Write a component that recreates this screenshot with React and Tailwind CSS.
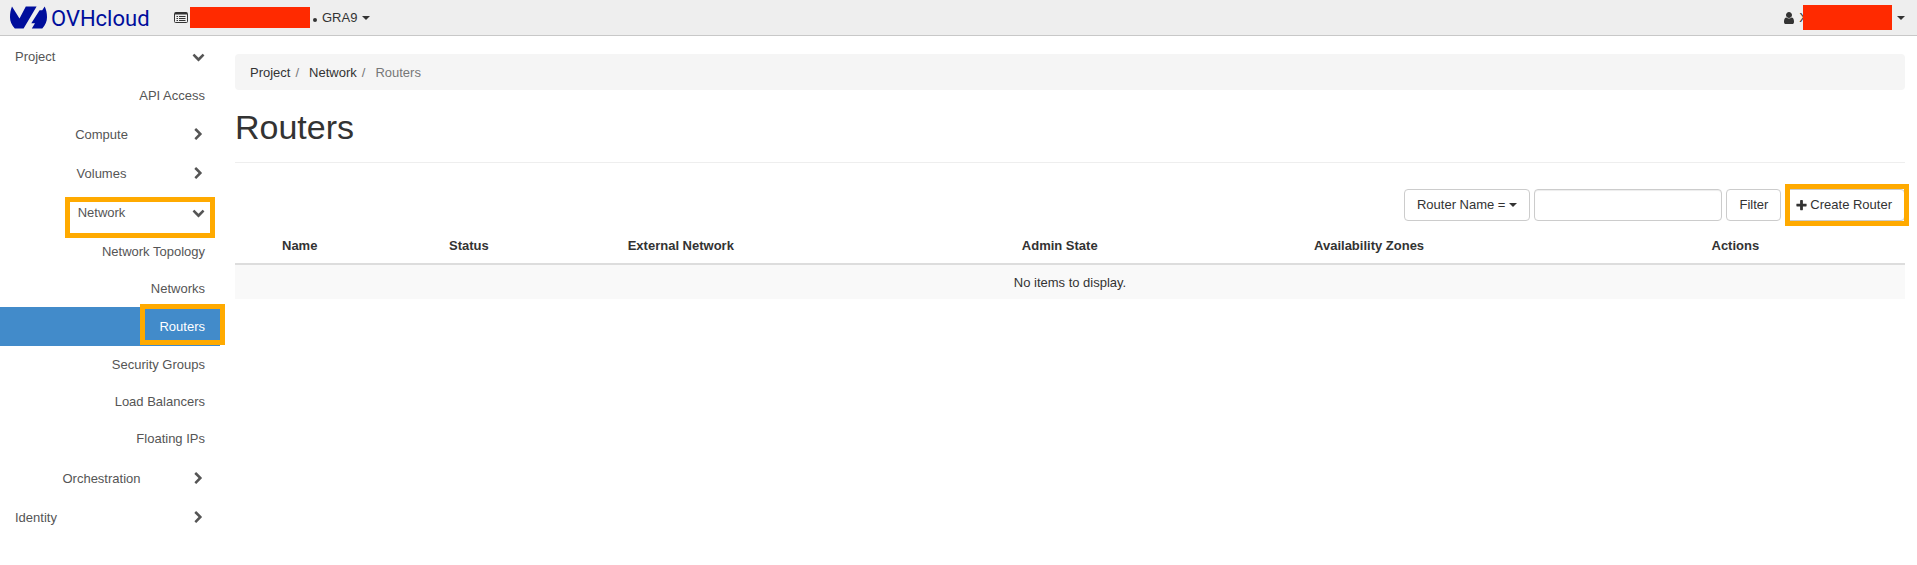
const down = "M1683 808l-742 741q-19 19-45 19t-45-19l-742-741q-19-19-19-45.5t19-45.5l166-165q19-19 45-19t45 19l531 531 531-531q19-19 45-19t45 19l166 165q19 19 19 45.5t-19 45.5z";
const right = "M1363 877l-742 742q-19 19-45 19t-45-19l-166-166q-19-19-19-45t19-45l531-531-531-531q-19-19-19-45t19-45l166-166q19-19 45-19t45 19l742 742q19 19 19 45t-19 45z";
const user = "M1536 1399q0 109-62.5 187t-150.5 78h-854q-88 0-150.5-78t-62.5-187q0-85 8.5-160.5t31.5-152 58.5-131 94-89 134.5-34.5q131 128 313 128t313-128q76 0 134.5 34.5t94 89 58.5 131 31.5 152 8.5 160.5zm-256-887q0 159-112.5 271.5t-271.5 112.5-271.5-112.5-112.5-271.5 112.5-271.5 271.5-112.5 271.5 112.5 112.5 271.5z";
const plus = "M1600 736v192q0 40-28 68t-68 28h-416v416q0 40-28 68t-68 28h-192q-40 0-68-28t-28-68v-416h-416q-40 0-68-28t-28-68v-192q0-40 28-68t68-28h416v-416q0-40 28-68t68-28h192q40 0 68 28t28 68v416h416q40 0 68 28t28 68z";

function Icon({ d, className = "size-[13px]" }) {
  return (
    <svg viewBox="0 0 1792 1792" fill="currentColor" aria-hidden="true" className={`shrink-0 ${className}`}>
      <path d={d} />
    </svg>
  );
}

function Caret() {
  return (
    <svg viewBox="0 0 8 4" fill="currentColor" aria-hidden="true" className="h-1 w-2 shrink-0">
      <path d="M0 0h8L4 4z" />
    </svg>
  );
}

function ListIcon() {
  return (
    <svg viewBox="0 0 14 11" fill="none" stroke="currentColor" aria-hidden="true" className="h-[11px] w-3.5 shrink-0">
      <rect x="0.5" y="0.5" width="13" height="10" rx="1" />
      <path d="M1 1.5h12" strokeWidth="2" />
      <path d="M2.5 4.5h1.5M5 4.5h6.5M2.5 6.5h1.5M5 6.5h6.5M2.5 8.5h1.5M5 8.5h6.5" />
    </svg>
  );
}

function Logo() {
  return (
    <svg viewBox="0 0 144 24" role="img" aria-label="OVHcloud" className="h-6 w-36">
      <g fill="#000e9c">
        <path d="M2 0.5 9.5 12.5 15.8 0.5H26.6L13.6 22.5H4.8C1.5 19 0 15.5 0 11.3 0 7.3 0.7 3.6 2 0.5z" />
        <path d="M34.7 0.5C36.2 3.6 37 7 37 11.3 37 15.5 35.5 19 32.3 22.5H21.8L25 17.3H21.3L29.6 4.3H32.2z" />
      </g>
      <text x="41" y="20" fill="#000e9c" fontSize="22" fontFamily="Roboto, sans-serif">OVHcloud</text>
    </svg>
  );
}

function Highlight({ className }) {
  return <span aria-hidden="true" className={`pointer-events-none absolute z-10 border-5 border-[#ffaa00] ${className}`} />;
}

function Section({ label, open, top, marked, children }) {
  return (
    <li>
      <div className="relative">
        <button type="button" aria-expanded={!!open} className="flex h-[39px] w-full items-center px-[15px]">
          <span className={top ? "flex-1 text-left" : "flex-1 text-center"}>{label}</span>
          <span className="flex w-[17px] justify-end">
            <Icon d={open ? down : right} />
          </span>
        </button>
        {marked && <Highlight className="top-1 right-[5px] h-[41px] w-[150px]" />}
      </div>
      {children}
    </li>
  );
}

function Leaf({ label, tall, active }) {
  return (
    <li className="relative">
      <a
        href="#"
        className={`flex items-center justify-end px-[15px] ${tall || active ? "h-[39px]" : "h-[37px]"} ${active ? "bg-[#428bca] text-white" : ""}`}
      >
        {label}
      </a>
      {active && <Highlight className="-top-[3px] -right-[5px] h-[41px] w-[85px]" />}
    </li>
  );
}

function Sidebar() {
  return (
    <nav className="w-[220px] shrink-0 pt-px text-[#555]">
      <ul>
        <Section label="Project" open top>
          <ul>
            <Leaf label="API Access" tall />
            <Section label="Compute" />
            <Section label="Volumes" />
            <Section label="Network" open marked>
              <ul className="pt-px pb-0.5">
                <Leaf label="Network Topology" />
                <Leaf label="Networks" />
                <Leaf label="Routers" active />
                <Leaf label="Security Groups" />
                <Leaf label="Load Balancers" />
                <Leaf label="Floating IPs" />
              </ul>
            </Section>
            <Section label="Orchestration" />
          </ul>
        </Section>
        <Section label="Identity" top />
      </ul>
    </nav>
  );
}

const button = "flex h-8 items-center rounded border border-[#ccc] bg-white";

export default function App() {
  return (
    <div className="bg-white font-['Helvetica_Neue','Liberation_Sans',sans-serif] text-[13px] leading-[18px] text-[#333]">
      <header className="flex h-9 items-center border-b border-[#c8c8c8] bg-[#eee]">
        <a href="#" className="ml-2.5">
          <Logo />
        </a>
        <button type="button" className="ml-5 flex items-center">
          <ListIcon />
          <span className="ml-0.5 h-[21px] w-[120px] bg-[#ff2a00]" />
          <span className="mx-[3px] mt-1 size-1 rounded-full bg-[#333]" />
          <span className="mr-[5px] ml-0.5">GRA9</span>
          <Caret />
        </button>
        <button type="button" className="mr-3 ml-auto flex items-center">
          <Icon d={user} className="size-3.5" />
          <span className="ml-[3px]">X</span>
          <span className="relative mr-[5px] -ml-[5px] h-[25px] w-[89px] bg-[#ff2a00]" />
          <Caret />
        </button>
      </header>
      <div className="flex">
        <Sidebar />
        <main className="min-w-0 flex-1 pt-[18px] pr-3 pl-[15px]">
          <nav aria-label="Breadcrumb" className="rounded bg-[#f5f5f5] px-[15px] pt-2.5 pb-2">
            <ol className="flex">
              <li><a href="#">Project</a></li>
              <li className="px-[5px] text-[#777]">/</li>
              <li className="pl-[5px]"><a href="#">Network</a></li>
              <li className="px-[5px] text-[#777]">/</li>
              <li className="pl-[5px] text-[#777]">Routers</li>
            </ol>
          </nav>
          <h1 className="border-b border-[#eee] pt-[18px] pb-[15px] text-[34px] leading-[39px]">Routers</h1>
          <form className="mt-[26px] flex items-center justify-end gap-1" onSubmit={(e) => e.preventDefault()}>
            <button type="button" className={`${button} gap-1 px-3`}>
              Router Name = <Caret />
            </button>
            <input
              type="text"
              aria-label="Router name"
              className="h-8 w-[188px] rounded border border-[#ccc] px-3 shadow-[inset_0_1px_1px_rgba(0,0,0,0.075)] outline-none"
            />
            <button type="submit" className={`${button} px-3`}>Filter</button>
            <div className="relative">
              <button type="button" className={`${button} gap-0.5 pr-3 pl-[9px]`}>
                <Icon d={plus} />
                Create Router
              </button>
              <Highlight className="-inset-y-[5px] -right-1 left-0" />
            </div>
          </form>
          <table className="mt-[7px] w-full table-fixed text-left">
            <thead>
              <tr className="h-9 border-b-2 border-[#ddd]">
                <td className="w-[39px]" />
                <th scope="col" className="w-[10%] px-2">Name</th>
                <th scope="col" className="w-[10.7%] px-2">Status</th>
                <th scope="col" className="w-[23.6%] px-2">External Network</th>
                <th scope="col" className="w-[17.5%] px-2">Admin State</th>
                <th scope="col" className="w-[23.8%] px-2">Availability Zones</th>
                <th scope="col" className="px-2">Actions</th>
              </tr>
            </thead>
            <tbody>
              <tr className="h-[35px] bg-[#f9f9f9]">
                <td colSpan={7} className="px-2 pt-0.5 text-center">No items to display.</td>
              </tr>
            </tbody>
          </table>
        </main>
      </div>
    </div>
  );
}
